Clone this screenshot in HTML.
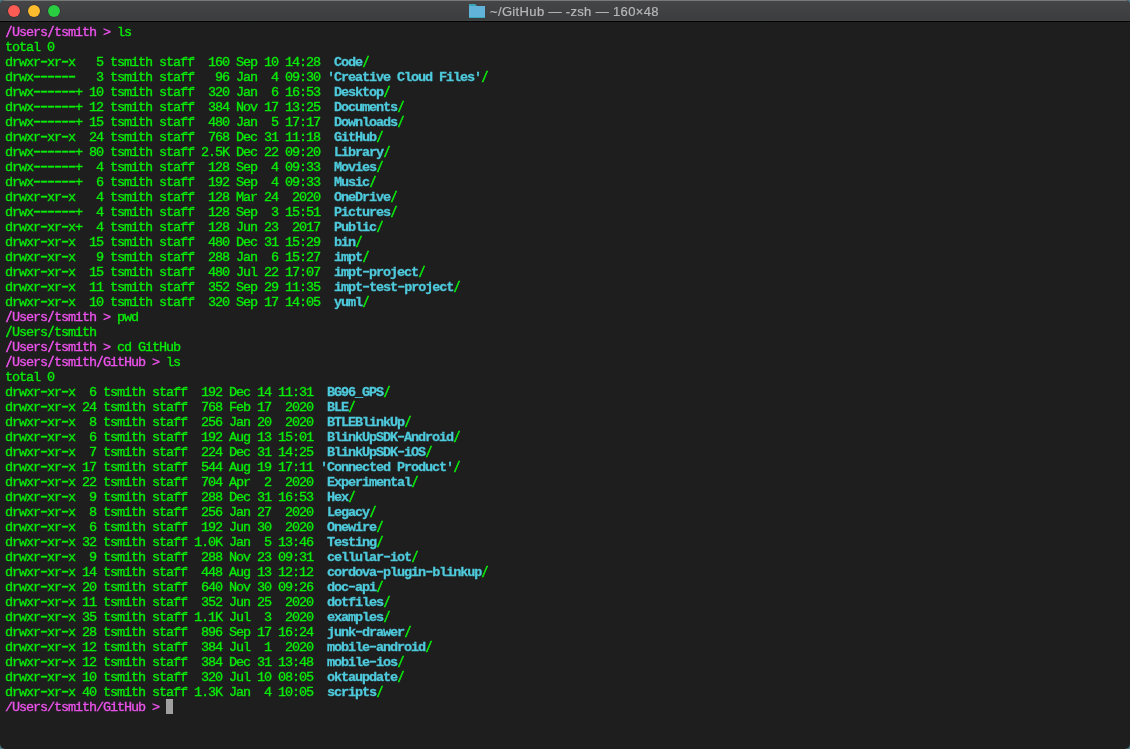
<!DOCTYPE html>
<html><head><meta charset="utf-8">
<style>
html,body{margin:0;padding:0;width:1130px;height:749px;overflow:hidden;background:#4a7a86;}
.win{position:absolute;left:0;top:0;width:1130px;height:749px;background:#1e1e1e;border-radius:5px;overflow:hidden;}
.tb{position:absolute;left:0;top:0;width:1130px;height:21px;background:linear-gradient(#464648,#3b3c3d);border-bottom:1px solid #000;}
.tb .bl{position:absolute;left:0;top:20px;width:100%;height:1px;background:#424344;}
.tb .hl{position:absolute;left:0;top:0;width:100%;height:1px;background:#777878;}
.dot{position:absolute;top:5px;width:12px;height:12px;border-radius:50%;box-shadow:0 0 0 0.5px rgba(20,10,30,0.45);}
.title{will-change:transform;position:absolute;top:4px;left:490px;white-space:nowrap;font:13px "Liberation Sans",sans-serif;letter-spacing:0.35px;color:#b8b8b8;-webkit-text-stroke:0.2px #b8b8b8;}
.fold{position:absolute;left:469px;top:6px;width:16px;height:12px;background:#62b3d9;box-shadow:inset 0 -1px 0 #3aa8b8;}
.fold:before{content:"";position:absolute;left:0;top:-2px;width:8px;height:2px;background:#3aa5b5;clip-path:polygon(0 0,6px 0,8px 100%,0 100%);}
pre{will-change:transform;position:absolute;left:5px;top:25px;margin:0;font-family:"Liberation Mono",monospace;font-size:13.5px;letter-spacing:-1.1012px;line-height:15px;color:#0aea0a;-webkit-text-stroke-width:0.35px;}
pre b{color:#4ecadc;font-weight:bold;-webkit-text-stroke-width:0.3px;}
pre s{display:inline-block;text-decoration:none;transform:scale(0.85,1.08);transform-origin:50% 3.2px;-webkit-text-stroke-width:0.6px;}
pre u{text-decoration:none;font-weight:bold;position:relative;top:-0.7px;}
.m{color:#ea52ea;}
.cur{display:inline-block;width:7px;height:15px;background:#a0a0a0;vertical-align:top;position:relative;top:-1px;}
</style></head><body>
<div class="win">
<div class="tb"><div class="hl"></div><div class="bl"></div>
<div class="dot" style="left:8px;background:#fc5c53"></div>
<div class="dot" style="left:28px;background:#fdbb2e"></div>
<div class="dot" style="left:48px;background:#2acd41"></div>
<div class="fold"></div><div class="title">~/GitHub — -zsh — 160×48</div>
</div>
<pre><span class="m"><s>/</s>Users<s>/</s>tsmith &gt;</span> ls
total 0
drwxr<u>–</u>xr<u>–</u>x   5 tsmith staff  160 Sep 10 14:28  <b>Code</b><s>/</s>
drwx<u>––––––</u>   3 tsmith staff   96 Jan  4 09:30 <b>'Creative Cloud Files'</b><s>/</s>
drwx<u>––––––</u>+ 10 tsmith staff  320 Jan  6 16:53  <b>Desktop</b><s>/</s>
drwx<u>––––––</u>+ 12 tsmith staff  384 Nov 17 13:25  <b>Documents</b><s>/</s>
drwx<u>––––––</u>+ 15 tsmith staff  480 Jan  5 17:17  <b>Downloads</b><s>/</s>
drwxr<u>–</u>xr<u>–</u>x  24 tsmith staff  768 Dec 31 11:18  <b>GitHub</b><s>/</s>
drwx<u>––––––</u>+ 80 tsmith staff 2.5K Dec 22 09:20  <b>Library</b><s>/</s>
drwx<u>––––––</u>+  4 tsmith staff  128 Sep  4 09:33  <b>Movies</b><s>/</s>
drwx<u>––––––</u>+  6 tsmith staff  192 Sep  4 09:33  <b>Music</b><s>/</s>
drwxr<u>–</u>xr<u>–</u>x   4 tsmith staff  128 Mar 24  2020  <b>OneDrive</b><s>/</s>
drwx<u>––––––</u>+  4 tsmith staff  128 Sep  3 15:51  <b>Pictures</b><s>/</s>
drwxr<u>–</u>xr<u>–</u>x+  4 tsmith staff  128 Jun 23  2017  <b>Public</b><s>/</s>
drwxr<u>–</u>xr<u>–</u>x  15 tsmith staff  480 Dec 31 15:29  <b>bin</b><s>/</s>
drwxr<u>–</u>xr<u>–</u>x   9 tsmith staff  288 Jan  6 15:27  <b>impt</b><s>/</s>
drwxr<u>–</u>xr<u>–</u>x  15 tsmith staff  480 Jul 22 17:07  <b>impt<u>–</u>project</b><s>/</s>
drwxr<u>–</u>xr<u>–</u>x  11 tsmith staff  352 Sep 29 11:35  <b>impt<u>–</u>test<u>–</u>project</b><s>/</s>
drwxr<u>–</u>xr<u>–</u>x  10 tsmith staff  320 Sep 17 14:05  <b>yuml</b><s>/</s>
<span class="m"><s>/</s>Users<s>/</s>tsmith &gt;</span> pwd
<s>/</s>Users<s>/</s>tsmith
<span class="m"><s>/</s>Users<s>/</s>tsmith &gt;</span> cd GitHub
<span class="m"><s>/</s>Users<s>/</s>tsmith<s>/</s>GitHub &gt;</span> ls
total 0
drwxr<u>–</u>xr<u>–</u>x  6 tsmith staff  192 Dec 14 11:31  <b>BG96_GPS</b><s>/</s>
drwxr<u>–</u>xr<u>–</u>x 24 tsmith staff  768 Feb 17  2020  <b>BLE</b><s>/</s>
drwxr<u>–</u>xr<u>–</u>x  8 tsmith staff  256 Jan 20  2020  <b>BTLEBlinkUp</b><s>/</s>
drwxr<u>–</u>xr<u>–</u>x  6 tsmith staff  192 Aug 13 15:01  <b>BlinkUpSDK<u>–</u>Android</b><s>/</s>
drwxr<u>–</u>xr<u>–</u>x  7 tsmith staff  224 Dec 31 14:25  <b>BlinkUpSDK<u>–</u>iOS</b><s>/</s>
drwxr<u>–</u>xr<u>–</u>x 17 tsmith staff  544 Aug 19 17:11 <b>'Connected Product'</b><s>/</s>
drwxr<u>–</u>xr<u>–</u>x 22 tsmith staff  704 Apr  2  2020  <b>Experimental</b><s>/</s>
drwxr<u>–</u>xr<u>–</u>x  9 tsmith staff  288 Dec 31 16:53  <b>Hex</b><s>/</s>
drwxr<u>–</u>xr<u>–</u>x  8 tsmith staff  256 Jan 27  2020  <b>Legacy</b><s>/</s>
drwxr<u>–</u>xr<u>–</u>x  6 tsmith staff  192 Jun 30  2020  <b>Onewire</b><s>/</s>
drwxr<u>–</u>xr<u>–</u>x 32 tsmith staff 1.0K Jan  5 13:46  <b>Testing</b><s>/</s>
drwxr<u>–</u>xr<u>–</u>x  9 tsmith staff  288 Nov 23 09:31  <b>cellular<u>–</u>iot</b><s>/</s>
drwxr<u>–</u>xr<u>–</u>x 14 tsmith staff  448 Aug 13 12:12  <b>cordova<u>–</u>plugin<u>–</u>blinkup</b><s>/</s>
drwxr<u>–</u>xr<u>–</u>x 20 tsmith staff  640 Nov 30 09:26  <b>doc<u>–</u>api</b><s>/</s>
drwxr<u>–</u>xr<u>–</u>x 11 tsmith staff  352 Jun 25  2020  <b>dotfiles</b><s>/</s>
drwxr<u>–</u>xr<u>–</u>x 35 tsmith staff 1.1K Jul  3  2020  <b>examples</b><s>/</s>
drwxr<u>–</u>xr<u>–</u>x 28 tsmith staff  896 Sep 17 16:24  <b>junk<u>–</u>drawer</b><s>/</s>
drwxr<u>–</u>xr<u>–</u>x 12 tsmith staff  384 Jul  1  2020  <b>mobile<u>–</u>android</b><s>/</s>
drwxr<u>–</u>xr<u>–</u>x 12 tsmith staff  384 Dec 31 13:48  <b>mobile<u>–</u>ios</b><s>/</s>
drwxr<u>–</u>xr<u>–</u>x 10 tsmith staff  320 Jul 10 08:05  <b>oktaupdate</b><s>/</s>
drwxr<u>–</u>xr<u>–</u>x 40 tsmith staff 1.3K Jan  4 10:05  <b>scripts</b><s>/</s>
<span class="m">/Users/tsmith/GitHub &gt;</span> <i class="cur"></i></pre>
</div>
</body></html>
